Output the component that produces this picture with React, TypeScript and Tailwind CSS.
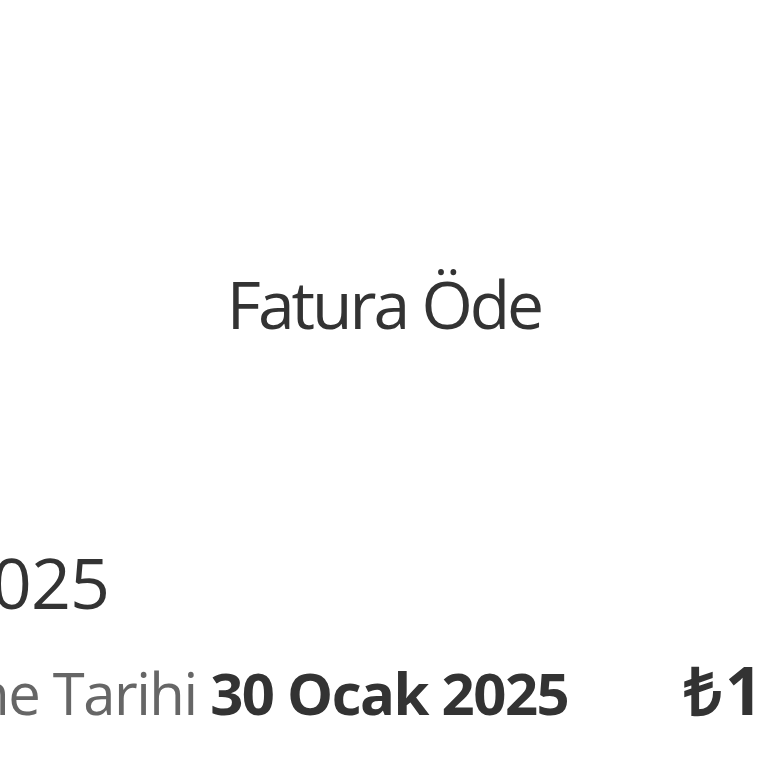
export default function App() {
  return (
    <div className="min-h-screen w-[768px] h-[768px] overflow-hidden bg-white text-[#333333] font-['Open_Sans',sans-serif]">
      {/* page title */}
      <header className="h-[610px] flex flex-col">
        <div className="h-[248px]" />
        <h1 className="text-center text-[66px] leading-[110px] tracking-[-3px]">Fatura Öde</h1>
      </header>

      {/* bill summary */}
      <section className="ml-[-264px] w-[1600px] flex flex-col -mt-[78px]">
        <div className="pl-[40px] text-[70px] leading-[100px] tracking-[-1px]">Ocak 2025</div>
        <div className="flex items-baseline mt-[12px]">
          <p className="shrink-0 text-[58px] leading-[90px] text-[#666666] w-[948px] tracking-[-1.5px]">
            Son Ödeme Tarihi <span className="font-bold text-[#333333]">30 Ocak 2025</span>
          </p>
          <p className="shrink-0 text-[66px] font-bold leading-[90px] tracking-[3px]">₺152,40</p>
        </div>
      </section>
    </div>
  );
}
